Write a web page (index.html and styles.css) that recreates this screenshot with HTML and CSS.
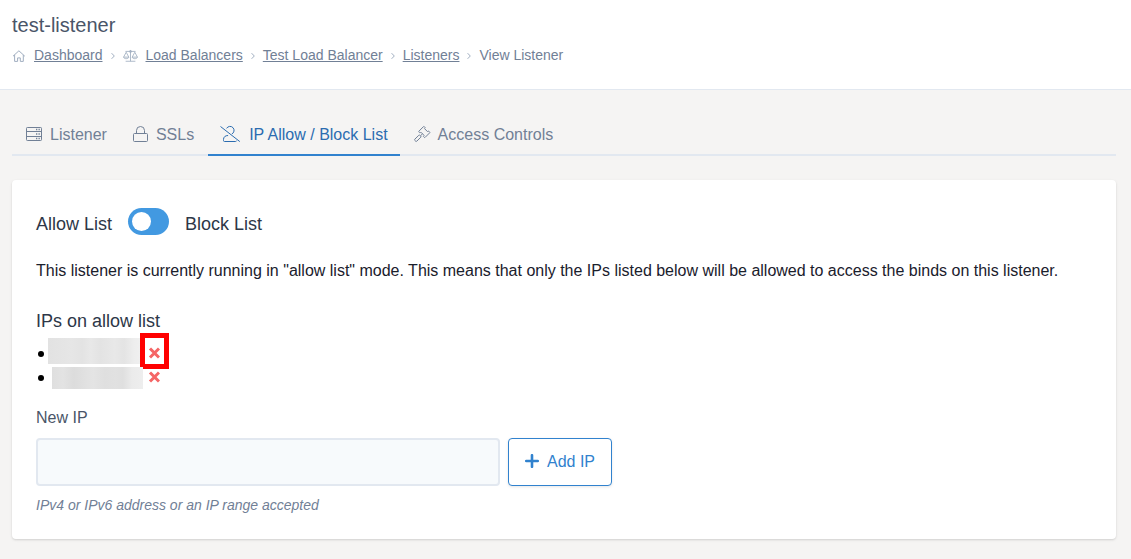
FILE: index.html
```html
<!DOCTYPE html>
<html lang="en">
<head>
<meta charset="utf-8">
<meta name="viewport" content="width=device-width, initial-scale=1">
<title>test-listener</title>
<link rel="stylesheet" href="styles.css">
</head>
<body>
<header class="page-header">
  <h1 class="page-title">test-listener</h1>
  <nav class="breadcrumbs" aria-label="Breadcrumb">
    <svg class="crumb-icon crumb-home" viewBox="0 0 14 14" aria-hidden="true"><path d="M1 7.2 6.9 1.8 12.8 7.2M2.6 6v6.4h3V8.9h2.7v3.5h3V6"/></svg>
    <a href="#dashboard">Dashboard</a>
    <svg class="chevron" viewBox="0 0 4 8" aria-hidden="true"><path d="M.6 1.2 3.3 4 .6 6.8"/></svg>
    <svg class="crumb-icon crumb-scale" viewBox="0 0 16 14" aria-hidden="true"><path d="M2.6 2.1h10.8M8 .8v11.8M2.8 12.6h10.4M.6 8.2 3.4 3l2.8 5.2M.6 8.2c.3 2.2 5.3 2.2 5.6 0zM9.8 8.2 12.6 3l2.8 5.2M9.8 8.2c.3 2.2 5.3 2.2 5.6 0z"/><circle cx="8" cy="2.2" r="1.1"/></svg>
    <a href="#load-balancers">Load Balancers</a>
    <svg class="chevron" viewBox="0 0 4 8" aria-hidden="true"><path d="M.6 1.2 3.3 4 .6 6.8"/></svg>
    <a href="#test-load-balancer">Test Load Balancer</a>
    <svg class="chevron" viewBox="0 0 4 8" aria-hidden="true"><path d="M.6 1.2 3.3 4 .6 6.8"/></svg>
    <a href="#listeners">Listeners</a>
    <svg class="chevron" viewBox="0 0 4 8" aria-hidden="true"><path d="M.6 1.2 3.3 4 .6 6.8"/></svg>
    <span aria-current="page">View Listener</span>
  </nav>
</header>
<main class="content">
  <nav class="tabs" aria-label="Listener sections">
    <a class="tab" href="#listener">
      <svg class="tab-icon" viewBox="0 0 16 16" aria-hidden="true"><path d="M1.3 1.5h13.4q.8 0 .8.8v11.4q0 .8-.8.8H1.3q-.8 0-.8-.8V2.3q0-.8.8-.8zM.5 5.5h15M.5 10.5h15"/><path class="dots" d="M10 3.5h1.3M12.5 3.5h1.3M10 8h1.3M12.5 8h1.3M10 12.5h1.3M12.5 12.5h1.3"/></svg>
      Listener
    </a>
    <a class="tab" href="#ssls">
      <svg class="tab-icon tab-icon-lock" viewBox="0 0 15 16" aria-hidden="true"><path d="M1.5 7.5h12q1 0 1 1v6q0 1-1 1h-12q-1 0-1-1v-6q0-1 1-1zM3.5 7.5V4.5a4 4 0 0 1 8 0v3"/></svg>
      SSLs
    </a>
    <a class="tab tab-active" href="#ip-list" aria-current="true">
      <svg class="tab-icon tab-icon-user" viewBox="0 0 21 16" aria-hidden="true"><path d="M.5.5 19.8 15.6M6.6 2.4A4 4 0 1 1 11.8 8M8.1 9.5c-2.8 0-4.6 1.5-4.6 4v1q0 1 1 1h11q.9 0 1-.8"/></svg>
      IP Allow / Block List
    </a>
    <a class="tab" href="#access">
      <svg class="tab-icon" viewBox="0 0 16 16" aria-hidden="true"><path d="M9.4.7 5 5.1q-.5.5 0 1l.5.5q.5.5 1 0l.4-.4 3.2 3.2-.4.4q-.5.5 0 1l.5.5q.5.5 1 0l4.4-4.4q.5-.5 0-1l-.5-.5q-.5-.5-1 0l-.4.4-3.2-3.2.4-.4q.5-.5 0-1l-.5-.5q-.5-.5-1 0zM8.5 7.8 6.4 9.9M4.8 9.3.9 13.1q-.7.7 0 1.4l.6.6q.7.7 1.4 0l3.9-3.9q.5-.5 0-1l-1-.9q-.5-.4-1 0z"/></svg>
      Access Controls
    </a>
  </nav>
  <section class="card">
    <div class="mode">
      <label for="list-mode">Allow List</label>
      <input class="switch" id="list-mode" type="checkbox" role="switch" aria-label="Use block list">
      <label for="list-mode">Block List</label>
    </div>
    <p class="mode-text">This listener is currently running in "allow list" mode. This means that only the IPs listed below will be allowed to access the binds on this listener.</p>
    <h2 class="list-title">IPs on allow list</h2>
    <ul class="ip-list">
      <li class="ip-row">
        <span class="ip ip-first"></span>
        <button class="remove remove-marked" type="button" aria-label="Remove IP"><svg viewBox="0 0 12 14" aria-hidden="true"><path d="m2 1.5 9 9m0-9-9 9"/></svg></button>
      </li>
      <li class="ip-row">
        <span class="ip"></span>
        <button class="remove" type="button" aria-label="Remove IP"><svg viewBox="0 0 12 14" aria-hidden="true"><path d="m2 1.5 9 9m0-9-9 9"/></svg></button>
      </li>
    </ul>
    <form class="ip-form">
      <label class="field-label" for="new-ip">New IP</label>
      <div class="field-row">
        <input class="field" id="new-ip" type="text" aria-describedby="ip-help">
        <button class="add" type="button"><svg viewBox="0 0 14 14" aria-hidden="true"><path d="M7 1.2v11.6M1.2 7h11.6"/></svg>Add IP</button>
      </div>
      <p class="help" id="ip-help">IPv4 or IPv6 address or an IP range accepted</p>
    </form>
  </section>
</main>
</body>
</html>
```

FILE: styles.css
```css
* {
  box-sizing: border-box;
}

body {
  margin: 0;
  background: #f5f4f3;
  color: #1a202c;
  font: 16px/24px "Liberation Sans", Arial, sans-serif;
}

h1, h2, p, ul {
  margin: 0;
  padding: 0;
  font-weight: 400;
}

svg {
  flex: none;
  fill: none;
  stroke: currentColor;
}

.page-header {
  padding: 10px 12px 23px;
  background: #fff;
  border-bottom: 1px solid #e2e8f0;
}

.page-title {
  color: #4a5568;
  font-size: 20px;
  line-height: 30px;
}

.breadcrumbs {
  display: flex;
  flex-wrap: wrap;
  align-items: center;
  gap: 8px;
  margin-top: 5px;
  color: #718096;
  font-size: 14px;
  line-height: 21px;
}

.breadcrumbs a {
  color: inherit;
}

.crumb-icon {
  height: 14px;
  color: #a0aec0;
}

.crumb-home {
  width: 14px;
}

.crumb-scale {
  width: 15px;
  stroke-width: 0.9;
}

.chevron {
  width: 4px;
  height: 8px;
  color: #a0aec0;
}

.content {
  padding: 24px 15px 20px 12px;
}

.tabs {
  display: flex;
  gap: 2px;
  padding-left: 2px;
  box-shadow: inset 0 -2px #e2e8f0;
}

.tab {
  display: flex;
  align-items: center;
  gap: 8px;
  padding: 9px 12px 7px;
  border-bottom: 2px solid transparent;
  color: #718096;
  text-decoration: none;
}

.tab-active {
  border-color: #3182ce;
  color: #2b6cb0;
}

.tab-icon {
  width: 16px;
  height: 16px;
  margin-bottom: 2px;
  overflow: visible;
}

.tab-icon-lock {
  width: 15px;
}

.tab-icon-user {
  width: 21px;
}

.dots {
  stroke-width: 1.3;
}

.card {
  margin-top: 24px;
  padding: 28px 24px 23px;
  background: #fff;
  border-radius: 4px;
  box-shadow: 0 1px 3px rgba(0, 0, 0, 0.1), 0 1px 2px rgba(0, 0, 0, 0.06);
}

.mode {
  display: flex;
  align-items: flex-end;
  gap: 16px;
  color: #2d3748;
  font-size: 18px;
  line-height: 27px;
}

.switch {
  appearance: none;
  width: 41px;
  height: 27px;
  margin: 0 0 3px;
  padding: 4px;
  border-radius: 14px;
  background: #4299e1;
}

.switch::before {
  content: "";
  display: block;
  width: 19px;
  height: 19px;
  border-radius: 50%;
  background: #fff;
}

.switch:checked::before {
  margin-left: auto;
}

.mode-text {
  margin-top: 21px;
}

.list-title {
  margin-top: 25px;
  color: #2d3748;
  font-size: 18px;
  line-height: 27px;
}

.ip-list {
  margin-top: 7px;
  list-style: none;
}

.ip-row {
  display: flex;
  align-items: center;
  height: 24px;
  padding-left: 2px;
}

.ip-row::before {
  content: "";
  width: 6px;
  height: 6px;
  margin-right: 8px;
  border-radius: 50%;
  background: #000;
}

.ip {
  position: relative;
  width: 91px;
  height: 24px;
}

.ip::after {
  content: "";
  position: absolute;
  inset: 1px 0;
  background: linear-gradient(90deg, #dfdfdf, #e3e3e3 12%, #dcdcdc 24%, #e4e4e4 45%, #dfdfdf 58%, #e1e1e1 70%, #dfdfdf 78%, #ebebeb 88%, #eee);
}

.ip-first::after {
  inset: -4px 0 2px -4px;
  background: linear-gradient(90deg, #e2e2e2, #e6e6e6 25%, #e3e3e3 36%, #e8e8e8 45%, #e3e3e3 55%, #e8e8e8 70%, #e4e4e4 80%, #ededed 90%, #f1f1f1);
}

.remove {
  position: relative;
  display: flex;
  margin-left: 5px;
  padding: 0;
  border: 0;
  background: none;
  color: #f56565;
}

.remove svg {
  width: 12px;
  height: 14px;
  stroke-width: 3;
}

.remove-marked::after {
  content: "";
  position: absolute;
  inset: -14px -9px -8px -8px;
  border: 5px solid #f00;
}

.ip-form {
  margin-top: 16px;
}

.field-label {
  color: #4a5568;
}

.field-row {
  display: flex;
  gap: 8px;
  margin-top: 8px;
}

.field {
  width: 100%;
  max-width: 464px;
  height: 48px;
  padding: 0 12px;
  border: 2px solid #e2e8f0;
  border-radius: 4px;
  background: #f7fafc;
  font: inherit;
}

.add {
  display: flex;
  align-items: center;
  gap: 8px;
  padding: 0 16px;
  border: 1px solid #3182ce;
  border-radius: 4px;
  background: #fff;
  box-shadow: 0 1px 3px rgba(0, 0, 0, 0.1);
  color: #3182ce;
  font: inherit;
  white-space: nowrap;
}

.add svg {
  width: 14px;
  height: 14px;
  margin-bottom: 2px;
  stroke-width: 2.6;
  stroke-linecap: round;
}

.help {
  margin-top: 9px;
  color: #718096;
  font-size: 14px;
  font-style: italic;
  line-height: 21px;
}
```
